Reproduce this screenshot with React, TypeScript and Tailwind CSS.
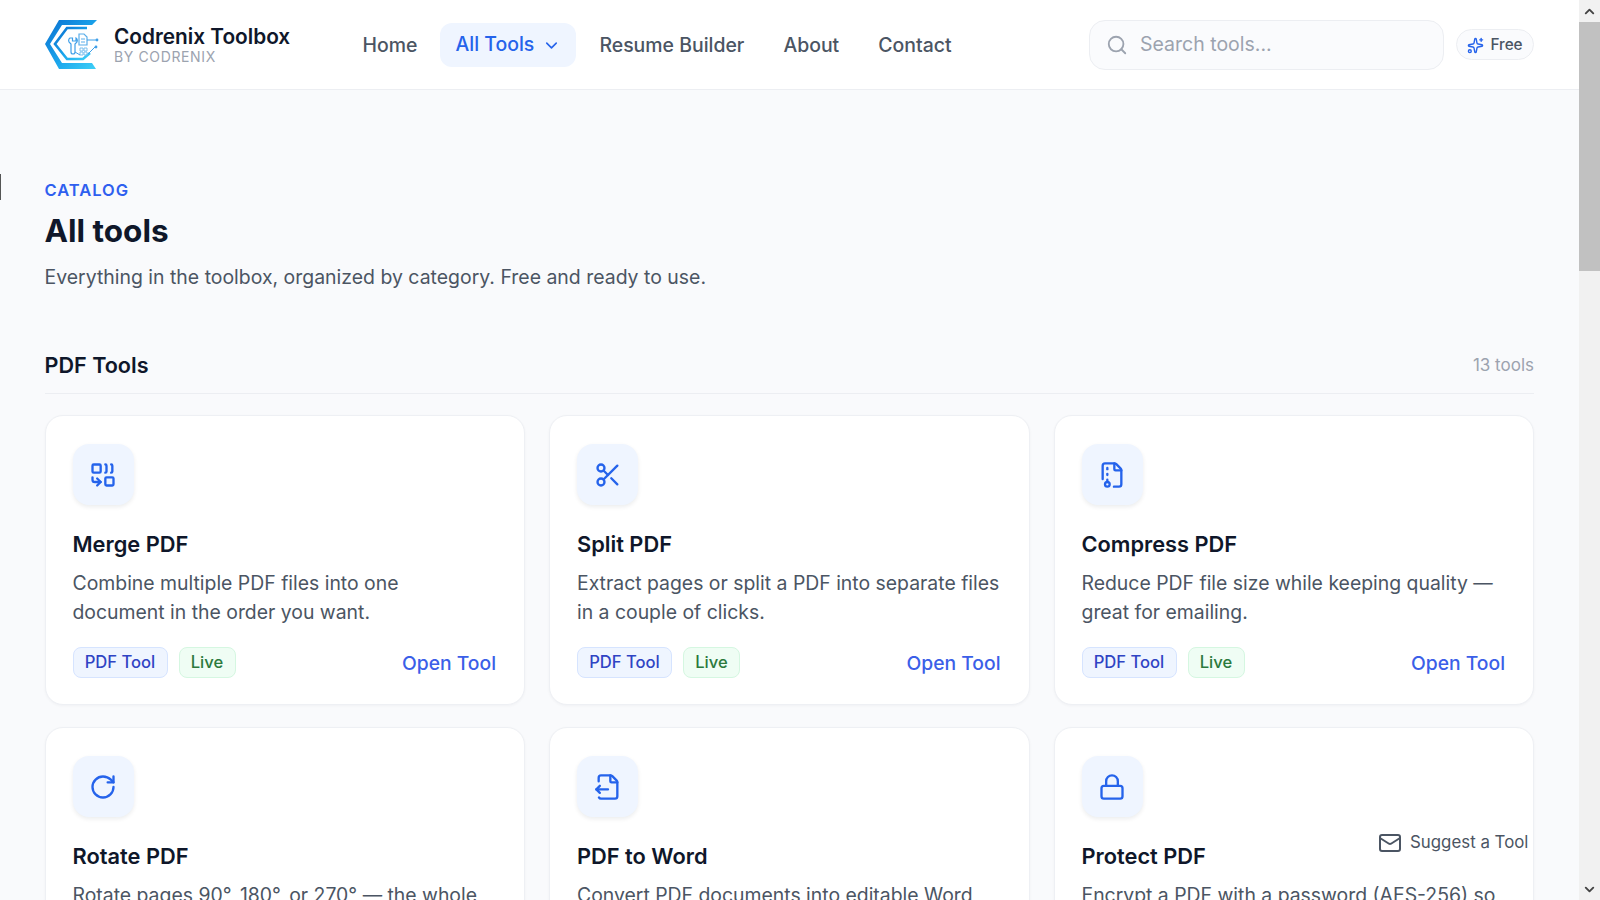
import { ChevronDown, ChevronUp, Combine, FileArchive, FileOutput, Lock, Mail, RotateCw, Scissors, Search, Sparkles } from "lucide-react";

const tools = [
  { name: "Merge PDF", Icon: Combine, lines: ["Combine multiple PDF files into one", "document in the order you want."] },
  { name: "Split PDF", Icon: Scissors, lines: ["Extract pages or split a PDF into separate files", "in a couple of clicks."] },
  { name: "Compress PDF", Icon: FileArchive, lines: ["Reduce PDF file size while keeping quality —", "great for emailing."] },
  { name: "Rotate PDF", Icon: RotateCw, lines: ["Rotate pages 90°, 180°, or 270° — the whole"] },
  { name: "PDF to Word", Icon: FileOutput, lines: ["Convert PDF documents into editable Word"] },
  { name: "Protect PDF", Icon: Lock, lines: ["Encrypt a PDF with a password (AES-256) so"] },
];

const Logo = () => (
  <svg width="54" height="50" viewBox="5 6 54 50" fill="none" className="shrink-0">
    <defs>
      <linearGradient id="logoGrad" x1="0" y1="0" x2="1" y2="1">
        <stop offset="0" stopColor="#0a6fd0" />
        <stop offset="0.55" stopColor="#1aa5ec" />
        <stop offset="1" stopColor="#3fd0f7" />
      </linearGradient>
    </defs>
    <path d="M19 6H57L52 11H22L10 30L22 49H52L56 55H19L5 30Z" fill="url(#logoGrad)" />
    <path d="M47 14H27L15 30L27 45H43L50 39" stroke="url(#logoGrad)" strokeWidth="2.6" />
    <path d="M30 24a3 3 0 0 0 0 5l1 1v8a2 2 0 0 0 4 0v-8l1-1a3 3 0 0 0 0-5v3h-2.5h-1v-3z" stroke="#3f9fe8" strokeWidth="1.2" />
    <path d="M39 20h5l3 3v8h-8z" stroke="#5aaeea" strokeWidth="1.2" />
    <path d="M41 25h4M41 28h4" stroke="#5aaeea" strokeWidth="1" />
    <path d="M47 26h9" stroke="#3f9fe8" strokeWidth="1" />
    <circle cx="57" cy="26" r="1.4" fill="#3f9fe8" />
    <path d="M40 34h3v3h-3zM44 34h3v3h-3zM40 38h3v3h-3zM44 38h3v3h-3z" stroke="#7cc0ee" strokeWidth="1" />
    <path d="M35 38l5 3M48 40l7-7" stroke="#3f9fe8" strokeWidth="1" />
    <circle cx="56" cy="33" r="1.4" fill="#3f9fe8" />
  </svg>
);

const Card = ({ name, Icon, lines }: (typeof tools)[number]) => (
  <div className="h-[290px] rounded-[18px] border border-[#eef0f4] bg-white pt-[28px] px-[27px] pb-[26px] shadow-[0_1px_3px_rgba(15,23,42,0.04)] flex flex-col">
    <div className="w-[61px] h-[61px] rounded-2xl bg-[#eff5ff] shadow-[0_2px_4px_rgba(15,23,42,0.08)] flex items-center justify-center text-[#2563eb]">
      <Icon size={28} strokeWidth={2} />
    </div>
    <h3 className="mt-[24px] text-[21.8px] leading-[30px] font-semibold text-[#0f172a]">{name}</h3>
    <p className="mt-[10px] text-[19.4px] leading-[28.5px] text-[#4b5563]">
      {lines.map((l) => (
        <span key={l} className="block whitespace-nowrap">{l}</span>
      ))}
    </p>
    <div className="mt-auto flex items-center gap-[11px]">
      <span className="h-[31px] w-[95px] rounded-lg border border-[#d6e4ff] bg-[#eff5ff] text-[16.6px] font-medium text-[#2f44c4] flex items-center justify-center">PDF Tool</span>
      <span className="h-[31px] w-[57px] rounded-lg border border-[#d5f7e1] bg-[#effdf4] text-[16.6px] font-medium text-[#2b7a3d] flex items-center justify-center">Live</span>
      <a className="ml-auto pt-[1px] pr-[1px] text-[19.3px] font-medium text-[#3b5fe8]">Open Tool</a>
    </div>
  </div>
);

export default function App() {
  return (
    <div className="relative h-screen w-screen overflow-hidden flex bg-[#f9fafc] font-[family-name:Inter,sans-serif]">
      <div className="flex-1 min-w-0 overflow-hidden">
        <header className="h-[90px] bg-white border-b border-[#eceef2] pl-[45px] pr-[45px] flex items-center">
          <div className="flex items-center gap-[15px] w-[317.5px]">
            <Logo />
            <div>
              <div className="text-[20.8px] leading-[25px] font-semibold text-[#0f172a]">Codrenix Toolbox</div>
              <div className="-mt-px text-[14px] leading-[17px] tracking-[0.045em] text-[#9ca3af]">BY CODRENIX</div>
            </div>
          </div>
          <nav className="flex items-center text-[19.45px] font-medium text-[#4b5563]">
            <a className="mr-[23px] pt-[2px]">Home</a>
            <a className="h-[44px] w-[136px] pt-[1px] rounded-xl bg-[#eff5ff] text-[#2563eb] flex items-center justify-center gap-2 mr-[23px]">
              All Tools <ChevronDown size={19} />
            </a>
            <a className="mr-[39px] pt-[2px]">Resume Builder</a>
            <a className="mr-[39px] pt-[2px]">About</a>
            <a className="pt-[2px]">Contact</a>
          </nav>
          <div className="ml-auto flex items-center gap-3">
            <div className="w-[355px] h-[50px] rounded-2xl border border-[#eceef2] bg-[#fafbfd] flex items-center gap-3 px-4 text-[#9ca3af]">
              <Search size={22} />
              <span className="pt-[1px] text-[19.5px]">Search tools...</span>
            </div>
            <div className="w-[78px] h-[31px] pt-[1px] rounded-full border border-[#eceef2] bg-[#fafbfd] flex items-center justify-center gap-1.5 text-[15.3px] font-medium text-[#4b5563]">
              <Sparkles size={17} className="text-[#2563eb]" /> Free
            </div>
          </div>
        </header>

        <main className="pl-[44.5px] pr-[45px] pt-[89px]">
          <div className="text-[16.5px] leading-[22px] font-semibold tracking-[0.06em] text-[#2f5fef]">CATALOG</div>
          <h1 className="mt-[10px] text-[31.5px] leading-[40px] font-bold text-[#0f172a]">All tools</h1>
          <p className="mt-[12px] text-[19.45px] leading-[28px] text-[#4b5563]">Everything in the toolbox, organized by category. Free and ready to use.</p>
          <div className="mt-[59px] h-[44px] border-b border-[#eceef2] flex items-start justify-between">
            <h2 className="text-[21.6px] leading-[30px] font-semibold text-[#0f172a]">PDF Tools</h2>
            <span className="text-[17px] leading-[30px] text-[#9ca3af]">13 tools</span>
          </div>
          <div className="mt-[21px] grid grid-cols-3 gap-x-6 gap-y-[22px]">
            {tools.map((t) => (
              <Card key={t.name} {...t} />
            ))}
          </div>
        </main>
      </div>

      <div className="w-[21px] shrink-0 bg-[#f1f1f1] flex flex-col">
        <div className="h-[22px] flex items-center justify-center text-[#444]"><ChevronUp size={15} strokeWidth={3} /></div>
        <div className="h-[249px] bg-[#c1c1c1]" />
        <div className="flex-1" />
        <div className="h-[22px] flex items-center justify-center text-[#444]"><ChevronDown size={15} strokeWidth={3} /></div>
      </div>

      <div className="absolute left-0 top-[174px] h-[26px] w-[1px] bg-[#555]" />
      <div className="absolute left-[1378px] top-[830px] flex items-center gap-[8px] text-[16.85px] text-[#4b5563]">
        <Mail size={24} /> Suggest a Tool
      </div>
    </div>
  );
}
